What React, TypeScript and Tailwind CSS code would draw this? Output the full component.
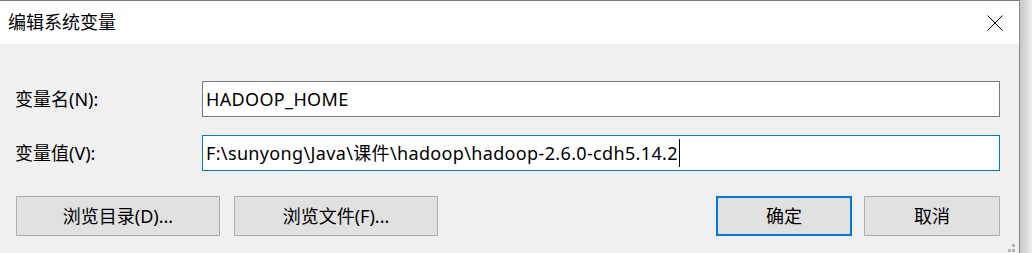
const font = { fontFamily: '"Noto Sans", "Noto Sans CJK SC", sans-serif' };

function Field({ label, value, focused }: { label: string; value: string; focused?: boolean }) {
  return (
    <div className="flex items-center h-9">
      <div className="w-[187px] shrink-0 text-[18px] text-black">{label}</div>
      <div
        className={`flex-1 h-9 bg-white border flex items-center pl-[3px] text-[18px] text-black ${
          focused ? "border-[#0078d7]" : "border-[#7a7a7a]"
        }`}
      >
        <span className="whitespace-nowrap tracking-[0.35px]">{value}</span>
        {focused && <span className="w-px h-[28px] bg-black ml-px" />}
      </div>
    </div>
  );
}

function Btn({ children, primary, wide }: { children: React.ReactNode; primary?: boolean; wide?: boolean }) {
  return (
    <button
      className={`h-[40px] bg-[#e1e1e1] text-[18px] text-black flex items-center justify-center ${
        wide ? "w-[204px]" : "w-[136px]"
      } ${primary ? "border-2 border-[#0078d7]" : "border border-[#adadad]"}`}
    >
      {children}
    </button>
  );
}

export default function App() {
  return (
    <div className="w-[1032px] h-[253px] flex bg-[#f0f0f0] overflow-hidden" style={font}>
      {/* Dialog */}
      <div className="w-[1019px] h-full flex flex-col border-t border-[#7a7a7a] relative">
        {/* Title bar */}
        <div className="h-[43px] bg-white flex items-center justify-between pl-2 pr-[16px] shrink-0">
          <span className="text-[18px] text-black">编辑系统变量</span>
          <svg width="16" height="16" viewBox="0 0 16 16">
            <path d="M0.5 0.5 L15.5 15.5 M15.5 0.5 L0.5 15.5" stroke="#000" strokeWidth="1" fill="none" />
          </svg>
        </div>

        {/* Body */}
        <div className="flex-1 bg-[#f0f0f0] pl-[15px] pr-[19px] pt-[37px]">
          <div className="flex flex-col gap-[18px]">
            <Field label="变量名(N):" value="HADOOP_HOME" />
            <Field label="变量值(V):" value="F:\sunyong\Java\课件\hadoop\hadoop-2.6.0-cdh5.14.2" focused />
          </div>
          <div className="flex items-center mt-[25px] pl-px">
            <div className="flex gap-[14px]">
              <Btn wide>浏览目录(D)...</Btn>
              <Btn wide>浏览文件(F)...</Btn>
            </div>
            <div className="flex gap-[12px] ml-auto">
              <Btn primary>确定</Btn>
              <Btn>取消</Btn>
            </div>
          </div>
        </div>

        {/* Resize grip */}
        <div className="absolute right-[4px] bottom-[1px] w-[7px] h-[8px]">
          <div className="absolute right-0 top-0 w-[3px] h-[3px] bg-[#b5b5b5]" />
          <div className="absolute right-0 bottom-0 w-[3px] h-[3px] bg-[#b5b5b5]" />
          <div className="absolute left-0 bottom-0 w-[3px] h-[3px] bg-[#b5b5b5]" />
        </div>
      </div>

      {/* Window edge and shadow */}
      <div className="w-px h-full bg-[#888888]" />
      <div className="flex-1 h-full bg-gradient-to-r from-[#c8c8c8] to-[#ececec]" />
    </div>
  );
}
